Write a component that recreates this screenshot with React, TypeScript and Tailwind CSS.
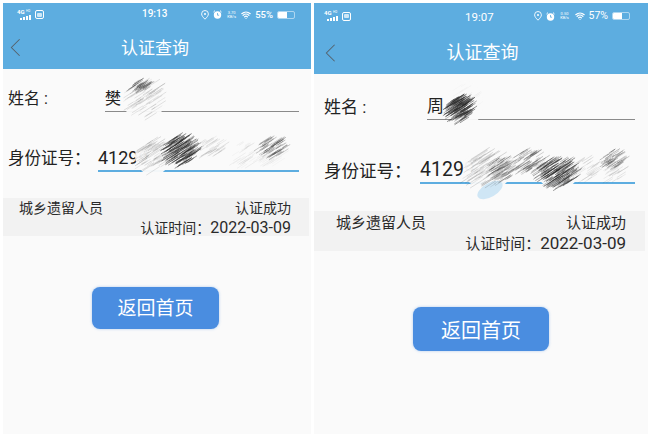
import { Wifi } from "lucide-react";

type Blob = { x: number; y: number; w: number; h: number; dark: number; n: number; wipe?: boolean };

// deterministic pen scribble used for the redacted parts of the photo
function Scribble({ blobs, className, children }: { blobs: Blob[]; className: string; children?: React.ReactNode }) {
  let seed = 7;
  const rnd = () => {
    seed = (seed * 16807) % 2147483647;
    return seed / 2147483647;
  };
  return (
    <svg width={650} height={438} className={className}>
      {blobs
        .filter((b) => b.wipe)
        .map((b, i) => (
          <ellipse key={`w${i}`} cx={b.x + b.w / 2} cy={b.y + b.h / 2} rx={b.w / 2 + 3} ry={b.h / 2 + 3} fill="#fafafa" opacity={0.96} />
        ))}
      {children}
      {blobs.map((b, i) =>
        Array.from({ length: b.n }).map((_, j) => {
          const a = rnd() * Math.PI * 2;
          const r = Math.sqrt(rnd());
          const cx = b.x + b.w / 2 + (Math.cos(a) * r * b.w) / 2;
          const cy = b.y + b.h / 2 + (Math.sin(a) * r * b.h) / 2;
          const len = 4 + rnd() * (b.w / 2.6);
          return (
            <line
              key={`${i}-${j}`}
              x1={cx - len / 2}
              y1={cy + len * 0.32}
              x2={cx + len / 2}
              y2={cy - len * 0.32}
              stroke="#2c2c2c"
              strokeWidth={0.6}
              opacity={b.dark * (0.5 + rnd() * 0.5)}
            />
          );
        }),
      )}
    </svg>
  );
}

function Signal() {
  return (
    <div className="relative w-[15px] h-[10px] text-white">
      <span className="absolute left-0 -top-[2px] text-[6px] leading-[8px] font-bold">4G</span>
      <span className="absolute left-[9px] -top-[1px] text-[3px] leading-[5px]">HD</span>
      <div className="absolute left-[3px] bottom-0 flex items-end gap-[1px]">
        <div className="w-[2px] h-[2px] bg-white" />
        <div className="w-[2px] h-[3px] bg-white" />
        <div className="w-[2px] h-[4px] bg-white" />
        <div className="w-[2px] h-[5px] bg-white" />
      </div>
    </div>
  );
}

function Chat() {
  return (
    <div className="w-[9px] h-[9px] rounded-[2px] border border-white flex items-center justify-center">
      <div className="w-[5px] h-[4px] bg-white/70 rounded-[1px]" />
    </div>
  );
}

function Alarm() {
  return (
    <svg width="9" height="9" viewBox="0 0 9 9">
      <circle cx="4.5" cy="5" r="3.7" fill="white" />
      <path d="M4.5 3v2.2h1.6" stroke="#5dade0" strokeWidth="0.8" fill="none" />
      <path d="M0.5 2 2 0.6M8.5 2 7 0.6" stroke="white" strokeWidth="1" />
    </svg>
  );
}

function Pin() {
  return (
    <svg width="8" height="10" viewBox="0 0 8 10">
      <path d="M4 9.2C2 7.2.6 5.6.6 3.9a3.4 3.4 0 0 1 6.8 0C7.4 5.6 6 7.2 4 9.2Z" fill="none" stroke="white" strokeWidth="0.9" />
      <circle cx="4" cy="3.9" r="1" fill="white" />
    </svg>
  );
}

function Battery({ level }: { level: string }) {
  return (
    <div className="w-[18px] h-[8px] rounded-[2px] border border-white/50 overflow-hidden">
      <div className={`${level} h-full bg-white`} />
    </div>
  );
}

function Chevron({ size }: { size: string }) {
  return (
    <svg viewBox="0 0 12 20" className={size}>
      <path d="M10.5 1 1.5 10l9 9" fill="none" stroke="#55626c" strokeWidth="1.1" />
    </svg>
  );
}

const leftBlobs: Blob[] = [
  { x: 126, y: 82, w: 36, h: 36, dark: 0.25, n: 70, wipe: true },
  { x: 130, y: 81, w: 20, h: 12, dark: 0.7, n: 30 },
  { x: 138, y: 140, w: 30, h: 32, dark: 0.3, n: 60, wipe: true },
  { x: 166, y: 136, w: 30, h: 28, dark: 0.9, n: 170, wipe: true },
  { x: 198, y: 138, w: 26, h: 18, dark: 0.2, n: 35 },
  { x: 232, y: 142, w: 24, h: 26, dark: 0.1, n: 30 },
  { x: 260, y: 138, w: 26, h: 18, dark: 0.55, n: 60 },
  { x: 258, y: 150, w: 28, h: 14, dark: 0.08, n: 25 },
];

const rightBlobs: Blob[] = [
  { x: 450, y: 84, w: 30, h: 40, dark: 0.05, n: 20, wipe: true },
  { x: 448, y: 97, w: 24, h: 24, dark: 0.95, n: 170 },
  { x: 466, y: 152, w: 44, h: 34, dark: 0.3, n: 90, wipe: true },
  { x: 490, y: 158, w: 24, h: 22, dark: 0.55, n: 60 },
  { x: 514, y: 150, w: 30, h: 22, dark: 0.5, n: 70, wipe: true },
  { x: 540, y: 158, w: 36, h: 28, dark: 0.85, n: 150, wipe: true },
  { x: 572, y: 158, w: 26, h: 22, dark: 0.2, n: 30 },
  { x: 604, y: 150, w: 20, h: 18, dark: 0.6, n: 50 },
  { x: 604, y: 164, w: 20, h: 18, dark: 0.2, n: 25 },
];

export default function App() {
  return (
    <div className="relative w-[650px] h-[438px] overflow-hidden bg-white flex pt-[3px] pb-[4px] pl-[3px] text-[#222] font-['Roboto','Noto_Sans_CJK_SC',sans-serif]">
      {/* left phone */}
      <div className="w-[308px] bg-[#fafafa] flex flex-col">
        <div className="h-[66px] bg-[#5dade0] flex flex-col shrink-0">
          <div className="h-[22px] pl-[14px] pr-[16px] pt-[1px] flex items-center justify-between text-white relative">
            <div className="flex items-center gap-[3px] w-[36px]">
              <Signal />
              <Chat />
            </div>
            <span className="absolute left-[139px] top-[3px] text-[10px] leading-[16px] font-medium">19:13</span>
            <div className="flex items-center gap-[4px]">
              <Pin />
              <Alarm />
              <span className="text-[4px] leading-[4px] w-[11px] text-center">3.70 KB/s</span>
              <Wifi size={10} strokeWidth={3} />
              <span className="text-[9.5px] leading-[10px] font-medium">55%</span>
              <Battery level="w-[55%]" />
            </div>
          </div>
          <div className="flex-1 flex items-center relative pt-[1px]">
            <div className="absolute left-[7px] top-[13px]">
              <Chevron size="w-[11px] h-[19px]" />
            </div>
            <span className="w-full text-center text-white text-[17px] leading-[24px] pr-[4px]">认证查询</span>
          </div>
        </div>

        <div className="flex items-end mt-[17px] h-[26px] pr-[12px]">
          <span className="w-[102px] pl-[5px] text-[16px] leading-[26px]">姓名 :</span>
          <div className="flex-1 border-b border-[#8a8a8a] text-[16px] leading-[25px] h-[26px]">樊</div>
        </div>

        <div className="flex items-end mt-[34px] h-[26px] pr-[12px]">
          <span className="w-[95px] pl-[5px] text-[16.5px] leading-[26px] whitespace-nowrap">身份证号：</span>
          <div className="flex-1 border-b-2 border-[#5dade0] text-[18px] leading-[24px] h-[26px]">41299</div>
        </div>

        <div className="mt-[26px] mr-[2px] h-[38px] bg-[#f2f2f2] pl-[16px] pr-[18px] pt-[1px] text-[14px] leading-[19px] text-[#2a2a2a]">
          <div className="flex justify-between">
            <span>城乡遗留人员</span>
            <span>认证成功</span>
          </div>
          <div className="text-right">
            认证时间：<span className="text-[16px]">2022-03-09</span>
          </div>
        </div>

        <button className="self-start ml-[89px] mt-[51px] w-[127px] h-[42px] pt-[3px] rounded-[8px] bg-[#4a8de0] text-white text-[19px] shadow-[0_0_3px_rgba(74,141,224,0.4)]">
          返回首页
        </button>
      </div>

      {/* right phone */}
      <div className="ml-[3px] w-[334px] bg-[#fafafa] flex flex-col">
        <div className="h-[71px] bg-[#5dade0] flex flex-col shrink-0">
          <div className="h-[24px] pl-[10px] pr-[18px] pt-[2px] flex items-center justify-between text-white relative">
            <div className="flex items-center gap-[3px] w-[36px]">
              <Signal />
              <Chat />
            </div>
            <span className="absolute left-[151px] top-[5px] text-[11.5px] leading-[18px]">19:07</span>
            <div className="flex items-center gap-[4px]">
              <Pin />
              <Alarm />
              <span className="text-[4px] leading-[4px] w-[12px] text-center">0.50 KB/s</span>
              <Wifi size={10} strokeWidth={3} />
              <span className="text-[10.5px] leading-[10px]">57%</span>
              <Battery level="w-[57%]" />
            </div>
          </div>
          <div className="flex-1 flex items-center relative pt-[4px]">
            <div className="absolute left-[11px] top-[16px]">
              <Chevron size="w-[11px] h-[20px]" />
            </div>
            <span className="w-full text-center text-white text-[18px] leading-[26px] pl-[3px]">认证查询</span>
          </div>
        </div>

        <div className="flex items-end mt-[20px] h-[26px] pr-[13px]">
          <span className="w-[113px] pl-[10px] text-[17px] leading-[26px]">姓名 :</span>
          <div className="flex-1 border-b border-[#8a8a8a] text-[17px] leading-[25px] h-[26px]">周</div>
        </div>

        <div className="flex items-end mt-[37px] h-[27px] pr-[13px]">
          <span className="w-[106px] pl-[10px] text-[17.5px] leading-[26px] whitespace-nowrap">身份证号：</span>
          <div className="flex-1 border-b-2 border-[#5dade0] text-[19.5px] leading-[25px] h-[27px]">41299</div>
        </div>

        <div className="mt-[27px] mr-[3px] h-[40px] bg-[#f2f2f2] pl-[22px] pr-[19px] pt-[2px] text-[15px] leading-[20px] text-[#2a2a2a]">
          <div className="flex justify-between">
            <span>城乡遗留人员</span>
            <span>认证成功</span>
          </div>
          <div className="text-right">
            认证时间：<span className="text-[17px]">2022-03-09</span>
          </div>
        </div>

        <button className="self-start ml-[99px] mt-[56px] w-[136px] h-[44px] pt-[3px] rounded-[8px] bg-[#4a8de0] text-white text-[20px] shadow-[0_0_3px_rgba(74,141,224,0.4)]">
          返回首页
        </button>
      </div>

      {/* scribbles over the name and id values */}
      <Scribble blobs={leftBlobs} className="absolute left-0 top-0 blur-[0.4px]" />
      <Scribble blobs={rightBlobs} className="absolute left-0 top-0 blur-[0.4px]">
        <ellipse cx={490} cy={190} rx={14} ry={7} fill="#cfe6f5" transform="rotate(-30 490 190)" />
      </Scribble>
    </div>
  );
}
